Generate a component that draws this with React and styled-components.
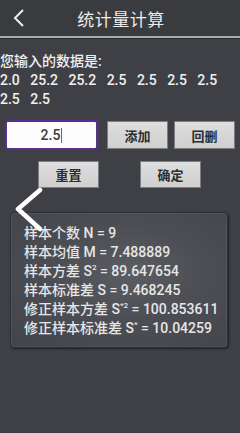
import React from 'react'
import styled, { createGlobalStyle } from 'styled-components'

const GlobalStyle = createGlobalStyle`
  body {
    margin: 0;
    background: #3f4045;
    font-family: Roboto, "Noto Sans CJK SC", sans-serif;
  }
`

const Page = styled.div`
  position: relative;
  width: 240px;
  height: 433px;
  overflow: hidden;
  background: #3f4045;
`

const Header = styled.div`
  position: relative;
  display: flex;
  align-items: center;
  justify-content: center;
  height: 36px;
  background: #3a3b3f;
`

const BackButton = styled.div`
  position: absolute;
  left: 12px;
  top: 8px;
  width: 14px;
  height: 20px;
`

const Title = styled.div`
  margin-left: 2px;
  font-size: 17px;
  color: #ececec;
  letter-spacing: 0.5px;
`

const Divider = styled.div`
  height: 2px;
  background: #a9aaad;
  border-bottom: 1px solid #2f3034;
`

const Content = styled.div`
  padding: 13px 0 0 0;
`

const DataText = styled.div`
  font-size: 14px;
  line-height: 19px;
  color: #f0f0f0;
  font-weight: 500;
  white-space: pre-wrap;
`

const Row = styled.div`
  display: flex;
  align-items: center;
  gap: ${p => p.gap}px;
  padding-left: ${p => p.left}px;
  margin-top: ${p => p.top}px;
`

const InputBox = styled.div`
  box-sizing: border-box;
  width: 93px;
  height: 30px;
  margin-right: 3px;
  border: 2px solid #5a2f8e;
  border-radius: 3px;
  background: #fdfdfd;
  display: flex;
  align-items: center;
  justify-content: center;
  font-size: 14px;
  font-weight: 500;
  color: #3c3c3c;
`

const Caret = styled.span`
  display: inline-block;
  width: 1px;
  height: 15px;
  margin-left: 1px;
  background: #6a6a6a;
`

const Button = styled.div`
  box-sizing: border-box;
  width: 61px;
  height: ${p => p.h || 28}px;
  display: flex;
  align-items: center;
  justify-content: center;
  background: linear-gradient(#dedede, #cfcfcf);
  border: 1px solid #7d7e82;
  font-size: 13px;
  color: #2e2e2e;
  font-weight: 700;
`

const ResultBox = styled.div`
  box-sizing: border-box;
  margin: 24px 12px 0 10px;
  height: 136px;
  padding: 11px 0 0 13px;
  border: 1px solid #2f3034;
  border-radius: 4px;
  background: radial-gradient(ellipse at 55% 45%, #5c5d62 0%, #4d4e53 45%, #43444a 100%);
  box-shadow: 1px 1px 2px rgba(0, 0, 0, 0.5), inset 0 0 0 1px rgba(255, 255, 255, 0.06);
`

const ResultLine = styled.div`
  font-size: 14px;
  line-height: 19px;
  color: #e6e6e6;
  font-weight: 500;
  white-space: nowrap;
`

const Sup = styled.sup`
  font-size: 8px;
  vertical-align: 6px;
  line-height: 0;
`

const SwipeArrow = styled.svg`
  position: absolute;
  left: 14px;
  top: 187px;
`

const results = [
  ['样本个数 N = 9'],
  ['样本均值 M = 7.488889'],
  ['样本方差 S', '2', ' = 89.647654'],
  ['样本标准差 S = 9.468245'],
  ['修正样本方差 S', '*2', ' = 100.853611'],
  ['修正样本标准差 S', '*', ' = 10.04259'],
]

const App = () => {
  return (
    <Page>
      <GlobalStyle />
      <Header>
        <BackButton>
          <svg width="14" height="20" viewBox="0 0 14 20">
            <path d="M11 2 L3 10 L11 18" fill="none" stroke="#eeeeee" strokeWidth="2" />
          </svg>
        </BackButton>
        <Title>统计量计算</Title>
      </Header>
      <Divider />
      <Content>
        <DataText>
          {'您输入的数据是:\n2.0   25.2   25.2   2.5   2.5   2.5   2.5   2.5   2.5'}
        </DataText>
        <Row left={5} top={11} gap={6}>
          <InputBox>
            2.5<Caret />
          </InputBox>
          <Button>添加</Button>
          <Button>回删</Button>
        </Row>
        <Row left={38} top={11} gap={41}>
          <Button h={27}>重置</Button>
          <Button h={27}>确定</Button>
        </Row>
        <ResultBox>
          {results.map((r, i) => (
            <ResultLine key={i}>
              {r[0]}
              {r[1] && <Sup>{r[1]}</Sup>}
              {r[2]}
            </ResultLine>
          ))}
        </ResultBox>
      </Content>
      <SwipeArrow width="30" height="46" viewBox="0 0 30 46">
        <path d="M26 3 L4 22 L26 42" fill="none" stroke="#ffffff" strokeWidth="4.5" strokeLinecap="round" strokeLinejoin="round" />
      </SwipeArrow>
    </Page>
  )
}

export default App
